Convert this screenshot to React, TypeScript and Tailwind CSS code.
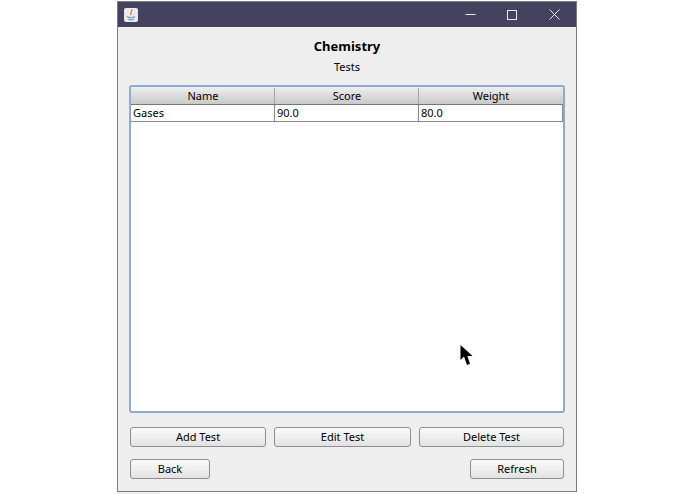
const font = { fontFamily: '"Noto Sans", "Liberation Sans", sans-serif' };

function Btn({ w, label }: { w: string; label: string }) {
  return (
    <button className={`${w} h-[20px] shrink-0 rounded-[3px] border border-[#8e8e8e] bg-gradient-to-b from-[#fbfbfb] to-[#e2e2e2] pb-[1px] text-[11px] leading-[17px] text-black`}>
      {label}
    </button>
  );
}

function Cursor() {
  return (
    <svg className="absolute left-[329px] top-[257px]" width="14" height="23" viewBox="0 0 14 22">
      <path d="M0.5 0.5 L0.5 15.5 L4 12 L7 20.5 L10 19.3 L7.3 11.5 L12.5 11.5 Z" fill="#000" />
    </svg>
  );
}

function JavaIcon() {
  return (
    <div className="flex h-[14px] w-[14px] items-center justify-center rounded-[2px] bg-[#e9e9ee]">
      <svg width="10" height="12" viewBox="0 0 10 12">
        <path d="M5.5 0.5 C7 2.5 3.5 3.5 5 6" stroke="#d9772e" strokeWidth="1.3" fill="none" />
        <path d="M1 7.5 C3 9 7 9 9 7.5 M2 10 C4 11 6.5 11 8 10" stroke="#7f9cc0" strokeWidth="1.1" fill="none" />
      </svg>
    </div>
  );
}

export default function App() {
  return (
    <div className="relative h-[494px] w-[695px] overflow-hidden bg-white pl-[117px] pt-[1px]" style={font}>
      <div className="flex h-[491px] w-[460px] flex-col border border-[#7d7d7d] bg-[#eeeeee]">
        <div className="flex h-[25px] shrink-0 items-center justify-between bg-[#45425f] pl-[6px] pr-[16px]">
          <JavaIcon />
          <div className="flex items-center text-[#e8e8ee]">
            <svg className="mr-[31px]" width="11" height="11" viewBox="0 0 11 11"><path d="M0.5 5.5 H10.5" stroke="currentColor" strokeWidth="1" /></svg>
            <svg className="mr-[32px]" width="10" height="10" viewBox="0 0 10 10"><rect x="0.5" y="0.5" width="9" height="9" fill="none" stroke="currentColor" strokeWidth="1" /></svg>
            <svg width="11" height="11" viewBox="0 0 11 11"><path d="M0.5 0.5 L10.5 10.5 M10.5 0.5 L0.5 10.5" stroke="currentColor" strokeWidth="1" /></svg>
          </div>
        </div>

        <div className="flex min-h-0 flex-1 flex-col px-[11px]">
          <div className="mt-[10px] h-[18px] text-center text-[13px] font-bold leading-[18px] text-black">Chemistry</div>
          <div className="mt-[3px] h-[17px] text-center text-[11px] leading-[17px] text-black">Tests</div>

          <div className="relative mt-[10px] h-[328px] w-[436px] rounded-[3px] border-2 border-[#8fa9d2] bg-white">
            <div className="flex h-[18px] border-b border-[#777] bg-gradient-to-b from-[#eeeeee] to-[#c9c9c9] pt-[1px] text-[11px] leading-[16px] text-black">
              <div className="w-[144px] border-r border-[#a5a5a5] pl-[1px] text-center">Name</div>
              <div className="w-[144px] border-r border-[#a5a5a5] pl-[1px] text-center">Score</div>
              <div className="flex-1 text-center">Weight</div>
            </div>
            <div className="flex h-[17px] border-b border-r border-[#8a8a8a] text-[11px] leading-[16px] text-black">
              <div className="w-[144px] border-r border-[#8a8a8a] pl-[2px]">Gases</div>
              <div className="w-[144px] border-r border-[#8a8a8a] pl-[2px]">90.0</div>
              <div className="flex-1 pl-[2px]">80.0</div>
            </div>
            <Cursor />
          </div>

          <div className="mt-[14px] flex gap-[8px] pl-[1px]">
            <Btn w="w-[136px]" label="Add Test" />
            <Btn w="w-[137px]" label="Edit Test" />
            <Btn w="w-[145px]" label="Delete Test" />
          </div>
          <div className="mt-[12px] flex w-[435px] justify-between pl-[1px]">
            <Btn w="w-[80px]" label="Back" />
            <Btn w="w-[94px]" label="Refresh" />
          </div>
        </div>
      </div>
      <div className="h-[2px] w-[43px] bg-[#eeeeee]"></div>
    </div>
  );
}
